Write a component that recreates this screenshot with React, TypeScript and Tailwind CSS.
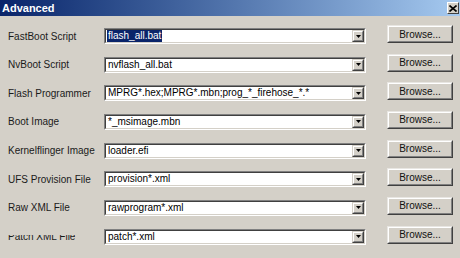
import React from "react";

const rows: { label: string; value: string; selected?: boolean; clipped?: boolean }[] = [
  { label: "FastBoot Script", value: "flash_all.bat", selected: true },
  { label: "NvBoot Script", value: "nvflash_all.bat" },
  { label: "Flash Programmer", value: "MPRG*.hex;MPRG*.mbn;prog_*_firehose_*.*" },
  { label: "Boot Image", value: "*_msimage.mbn" },
  { label: "Kernelflinger Image", value: "loader.efi" },
  { label: "UFS Provision File", value: "provision*.xml" },
  { label: "Raw XML File", value: "rawprogram*.xml" },
  { label: "Patch XML File", value: "patch*.xml", clipped: true },
];

function Combo({ value, selected }: { value: string; selected?: boolean }) {
  return (
    <div className="w-[262px] h-[16px] border border-t-[#808080] border-l-[#808080] border-b-white border-r-white">
      <div className="h-full border border-t-[#404040] border-l-[#404040] border-b-[#d4d0c8] border-r-[#d4d0c8] bg-white flex items-stretch">
        <div className="flex-1 flex items-center pl-[1px] overflow-hidden">
          <span
            className={
              "leading-[12px] px-[1px] whitespace-nowrap text-[10px] " +
              (selected ? "bg-[#0a246a] text-white" : "text-black")
            }
          >
            {value}
          </span>
        </div>
        <div className="w-[12px] border border-t-[#d4d0c8] border-l-[#d4d0c8] border-b-[#404040] border-r-[#404040] bg-[#d4d0c8]">
          <div className="h-full border border-t-white border-l-white border-b-[#808080] border-r-[#808080] flex items-center justify-center">
            <svg width="5" height="3" viewBox="0 0 5 3">
              <path d="M0 0H5L2.5 3Z" fill="#000" />
            </svg>
          </div>
        </div>
      </div>
    </div>
  );
}

function Browse() {
  return (
    <div className="ml-[21px] w-[66px] h-[18px] -mt-[3px] border border-t-[#e8e6e2] border-l-[#e8e6e2] border-b-[#404040] border-r-[#404040] bg-[#d4d0c8]">
      <div className="h-full border border-t-white border-l-white border-b-[#808080] border-r-[#808080] flex items-center justify-center text-[10px] text-[#111]">
        Browse...
      </div>
    </div>
  );
}

export default function App() {
  return (
    <div
      className="w-[460px] h-[258px] overflow-hidden bg-[#d4d0c8] select-none"
      style={{ fontFamily: '"Liberation Sans", Arial, sans-serif' }}
    >
      <div className="h-[16px] bg-gradient-to-r from-[#0a246a] to-[#a6caf0] flex items-center justify-between pl-[2px] pr-[1px]">
        <span className="text-white font-bold text-[11px] leading-none">Advanced</span>
        <div className="w-[12px] h-[12px] border border-t-white border-l-white border-b-[#404040] border-r-[#404040] bg-[#d4d0c8] flex items-center justify-center">
          <svg width="8" height="7" viewBox="0 0 8 7">
            <path d="M0.5 0.5L7.5 6.5M7.5 0.5L0.5 6.5" stroke="#000" strokeWidth="1.6" />
          </svg>
        </div>
      </div>
      <div className="pt-[12px] pl-[8px] grid grid-cols-[96px_262px_87px] gap-x-0 gap-y-[12.67px]">
        {rows.map((r) => (
          <React.Fragment key={r.label}>
            <div className="h-[16px] flex items-center text-[10px] text-[#1a1a1a] whitespace-nowrap">
              <span className={r.clipped ? "[clip-path:inset(6px_0_0_0)]" : ""}>{r.label}</span>
            </div>
            <Combo value={r.value} selected={r.selected} />
            <Browse />
          </React.Fragment>
        ))}
      </div>
    </div>
  );
}
